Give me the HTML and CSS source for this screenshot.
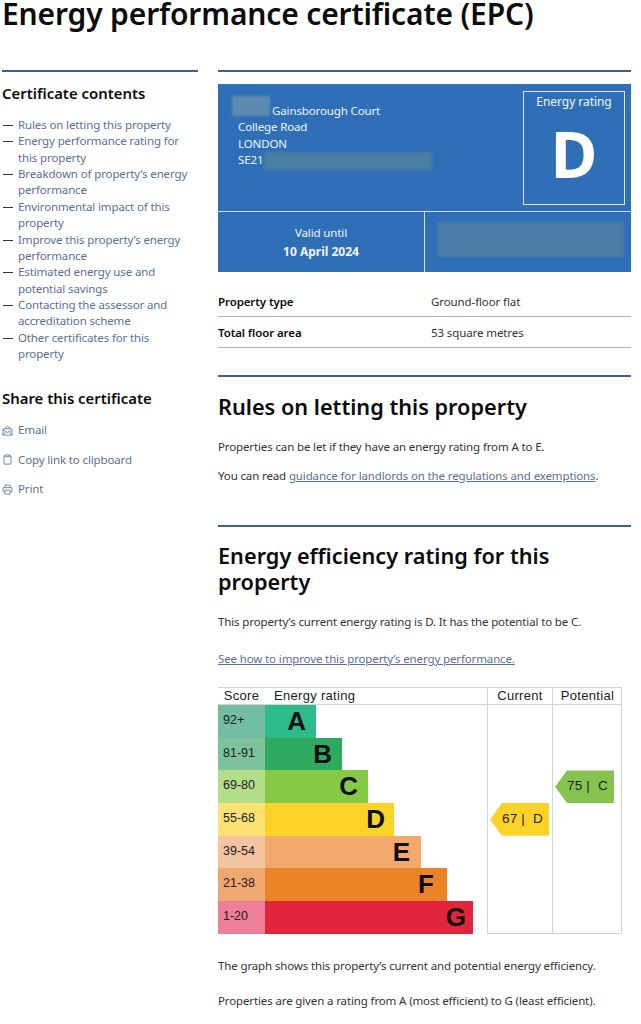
FILE: index.html
```html
<!DOCTYPE html>
<html lang="en">
<head>
<meta charset="utf-8">
<title>Energy performance certificate (EPC)</title>
<link rel="stylesheet" href="styles.css">
</head>
<body>
<h1 class="title">Energy performance certificate (EPC)</h1>
<div class="layout">
  <aside class="side">
    <h2 class="side-h">Certificate contents</h2>
    <ul class="toc">
      <li><a href="#">Rules on letting this property</a></li>
      <li><a href="#">Energy performance rating for this property</a></li>
      <li><a href="#">Breakdown of property’s energy performance</a></li>
      <li><a href="#">Environmental impact of this property</a></li>
      <li><a href="#">Improve this property’s energy performance</a></li>
      <li><a href="#">Estimated energy use and potential savings</a></li>
      <li><a href="#">Contacting the assessor and accreditation scheme</a></li>
      <li><a href="#">Other certificates for this property</a></li>
    </ul>
    <h2 class="side-h share-h">Share this certificate</h2>
    <ul class="share">
      <li><svg class="ico" viewBox="0 0 12 12"><path d="M1 5 6 1.2 11 5V11H1ZM1 5 6 8.2 11 5M1 11 4.5 7.2M11 11 7.5 7.2M3 4H9"/></svg><a href="#">Email</a></li>
      <li><svg class="ico" viewBox="0 0 12 12"><path d="M3.5 2H2.2V11H9.8V2H8.5M3.5 1H8.5V3H3.5Z"/></svg><a href="#">Copy link to clipboard</a></li>
      <li><svg class="ico" viewBox="0 0 12 12"><path d="M3.2 4V1.2H8.8V4M3 8.5H1.2V4H10.8V8.5H9M3.2 6.8H8.8V11H3.2Z"/></svg><a href="#">Print</a></li>
    </ul>
  </aside>
  <main class="main">
    <div class="epc">
      <div class="epc-top">
        <div class="address">
          <div class="addr-first"><span class="redact redact-num"></span><span>Gainsborough Court</span></div>
          <div>College Road</div>
          <div>LONDON</div>
          <div class="addr-post"><span>SE21</span><span class="redact redact-post"></span></div>
        </div>
        <div class="rating-box">
          <div class="rating-label">Energy rating</div>
          <div class="rating-letter">D</div>
        </div>
      </div>
      <div class="epc-bottom">
        <div class="valid">
          <div>Valid until</div>
          <div class="valid-date">10 April 2024</div>
        </div>
        <div class="cert-cell"><span class="redact redact-cert"></span></div>
      </div>
    </div>

    <dl class="facts">
      <div class="fact"><dt>Property type</dt><dd>Ground-floor flat</dd></div>
      <div class="fact"><dt>Total floor area</dt><dd>53 square metres</dd></div>
    </dl>

    <section class="section rules">
      <h2 class="sec-h">Rules on letting this property</h2>
      <p class="para">Properties can be let if they have an energy rating from A to E.</p>
      <p class="para">You can read <a href="#" class="link">guidance for landlords on the regulations and exemptions</a>.</p>
    </section>

    <section class="section efficiency">
      <h2 class="sec-h">Energy efficiency rating for this property</h2>
      <p class="para">This property’s current energy rating is D. It has the potential to be C.</p>
      <p class="para see"><a href="#" class="link">See how to improve this property’s energy performance.</a></p>

      <div class="chart">
        <div class="head h-score">Score</div>
        <div class="head h-rating">Energy rating</div>
        <div class="head h-current">Current</div>
        <div class="head h-potential">Potential</div>
        <div class="col col-current"></div>
        <div class="col col-potential"></div>

        <div class="score s-a">92+</div><div class="bar-cell"><div class="bar b-a w-a">A</div></div>
        <div class="score s-b">81-91</div><div class="bar-cell"><div class="bar b-b w-b">B</div></div>
        <div class="score s-c">69-80</div><div class="bar-cell"><div class="bar b-c w-c">C</div></div>
        <div class="score s-d">55-68</div><div class="bar-cell"><div class="bar b-d w-d">D</div></div>
        <div class="score s-e">39-54</div><div class="bar-cell"><div class="bar b-e w-e">E</div></div>
        <div class="score s-f">21-38</div><div class="bar-cell"><div class="bar b-f w-f">F</div></div>
        <div class="score s-g">1-20</div><div class="bar-cell"><div class="bar b-g w-g">G</div></div>

        <div class="badge badge-current">67 |&nbsp; D</div>
        <div class="badge badge-potential">75 |&nbsp; C</div>
      </div>

      <p class="para after">The graph shows this property’s current and potential energy efficiency.</p>
      <p class="para after2">Properties are given a rating from A (most efficient) to G (least efficient).</p>
    </section>
  </main>
</div>
</body>
</html>
```
FILE: styles.css
```css
* { box-sizing: border-box; }
html, body { margin: 0; padding: 0; }
body {
  width: 641px;
  height: 1024px;
  overflow: hidden;
  background: #fff;
  color: #1a1a1a;
  font-family: "Noto Sans", "Open Sans", sans-serif;
}
a { color: #5c6f92; text-decoration: none; }
ul { list-style: none; margin: 0; padding: 0; }

.title {
  margin: 0 0 0 2px;
  height: 70px;
  font-size: 30px;
  line-height: 28px;
  font-weight: 600;
  color: #0b0c0c;
  letter-spacing: -0.15px;
}
.layout {
  display: grid;
  grid-template-columns: 196px 413px;
  column-gap: 20px;
  padding-left: 2px;
}
.side { border-top: 2px solid #3e6189; padding-top: 11px; }
.side-h {
  margin: 0;
  font-size: 14.9px;
  line-height: 20px;
  font-weight: 600;
  color: #0b0c0c;
}
.toc { margin-top: 14px; font-size: 11.5px; line-height: 16.36px; letter-spacing: -0.13px; }
.toc li { position: relative; padding-left: 16px; padding-right: 8px; }
.toc li::before {
  content: "";
  position: absolute;
  left: 1px;
  top: 8px;
  width: 10px;
  height: 1px;
  background: #333;
}
.share-h { margin-top: 26px; }
.share { margin-top: 14px; font-size: 11.5px; line-height: 16px; letter-spacing: -0.13px; }
.share li { display: flex; align-items: center; gap: 5px; margin-bottom: 13.5px; }
.ico { width: 11px; height: 11px; fill: none; stroke: #6d7f9e; stroke-width: 1; flex: none; }

.main { border-top: 2px solid #3e6189; padding-top: 12px; }
.epc { background: #2e6fb8; color: #f2f6fb; font-size: 11.5px; line-height: 16.4px; letter-spacing: -0.13px; }
.epc-top { display: flex; justify-content: space-between; height: 128px; border-bottom: 1px solid #cfe0f0; padding: 7px 6px 7px 20px; }
.address { padding-top: 12px; }
.addr-first, .addr-post { display: flex; }
.addr-first { gap: 2px; margin-left: -6px; }
.addr-post { gap: 1px; }
.redact { display: block; filter: blur(1px); }
.redact-num { width: 38px; height: 20px; margin-top: -7px; background: #5c8ab0; }
.redact-post { width: 168px; height: 18px; margin-top: 0; background: #4b7ea4; }
.redact-cert { width: 187px; height: 35px; background: #4b7ca8; }
.rating-box {
  width: 102px;
  height: 114px;
  border: 1px solid #dbe8f4;
  text-align: center;
  padding-top: 2px;
}
.rating-label { font-size: 12px; line-height: 16px; letter-spacing: -0.05px; }
.rating-letter { font-size: 64px; line-height: 64px; margin-top: 12px; font-weight: 700; color: #fff; letter-spacing: 0; }
.epc-bottom { display: grid; grid-template-columns: 207px 1fr; height: 60px; }
.valid { text-align: center; padding-top: 11px; line-height: 19px; border-right: 1px solid #cfe0f0; }
.valid-date { font-size: 12px; font-weight: 700; letter-spacing: 0; }
.cert-cell { padding: 10px 8px 0 12px; }

.facts { margin: 14px 0 0; font-size: 11.5px; letter-spacing: -0.1px; }
.fact {
  display: grid;
  grid-template-columns: 213px 1fr;
  height: 31px;
  align-items: center;
  border-bottom: 1px solid #b1b4b6;
}
.fact dt { font-weight: 600; color: #0b0c0c; }
.fact dd { margin: 0; color: #333; }

.section { border-top: 2px solid #3e6189; }
.rules { margin-top: 27px; height: 150px; }
.sec-h {
  margin: 17px 0 0;
  font-size: 21.7px;
  line-height: 26px;
  font-weight: 600;
  color: #0b0c0c;
}
.efficiency .sec-h { margin-top: 16px; }
.para { margin: 0; font-size: 11.5px; line-height: 16px; letter-spacing: -0.13px; color: #333; }
.rules .sec-h + .para { margin-top: 19px; }
.rules .para + .para { margin-top: 13px; }
.efficiency .sec-h + .para { margin-top: 19px; }
.see { margin-top: 21px; }
.link { color: #5c6f92; text-decoration: underline; }

.chart {
  display: grid;
  position: relative;
  width: 404px;
  margin-top: 20px;
  grid-template-columns: 47px 222px 65px 70px;
  grid-template-rows: 17px repeat(7, 32.7px);
  border: 1px solid #d4d4d4;
  border-left: 0;
  border-bottom: 0;
  font-family: "Liberation Sans", Arial, sans-serif;
  color: #1c1c1c;
}
.head {
  grid-row: 1;
  font-size: 13px;
  line-height: 15px;
  letter-spacing: 0.3px;
  border-bottom: 1px solid #d4d4d4;
  text-align: center;
}
.h-score { grid-column: 1; }
.h-rating { grid-column: 2; text-align: left; padding-left: 9px; }
.h-current { grid-column: 3; border-left: 1px solid #d4d4d4; }
.h-potential { grid-column: 4; border-left: 1px solid #d4d4d4; }
.col { grid-row: 2 / 9; border-left: 1px solid #d4d4d4; border-bottom: 1px solid #d4d4d4; }
.col-current { grid-column: 3; }
.col-potential { grid-column: 4; }
.score {
  grid-column: 1;
  font-size: 12.5px;
  line-height: 31px;
  padding-left: 5px;
}
.bar-cell { grid-column: 2; }
.score.s-a, .score.s-a + .bar-cell { grid-row: 2; }
.score.s-b, .score.s-b + .bar-cell { grid-row: 3; }
.score.s-c, .score.s-c + .bar-cell { grid-row: 4; }
.score.s-d, .score.s-d + .bar-cell { grid-row: 5; }
.score.s-e, .score.s-e + .bar-cell { grid-row: 6; }
.score.s-f, .score.s-f + .bar-cell { grid-row: 7; }
.score.s-g, .score.s-g + .bar-cell { grid-row: 8; }
.bar {
  height: 100%;
  text-align: right;
  padding-right: 8px;
  font-size: 26px;
  line-height: 32px;
  font-weight: 700;
  color: #0e0e0e;
}
.w-a { width: 51px; padding-right: 10px; }
.w-b { width: 77px; padding-right: 10px; }
.w-c { width: 103px; padding-right: 10px; }
.w-d { width: 129px; padding-right: 9px; }
.w-e { width: 156px; padding-right: 11px; }
.w-f { width: 182px; padding-right: 13px; }
.w-g { width: 208px; padding-right: 7px; }
.s-a { background: #74bca2; } .b-a { background: #2dbb8c; }
.s-b { background: #7cc39b; } .b-b { background: #2eaa60; }
.s-c { background: #b4dd8a; } .b-c { background: #85c945; }
.s-d { background: #fbe272; } .b-d { background: #fbd327; }
.s-e { background: #f3c49f; } .b-e { background: #f3a96c; }
.s-f { background: #efa870; } .b-f { background: #ec8327; }
.s-g { background: #ee7f98; } .b-g { background: #e2243c; }

.badge {
  font-size: 13.5px;
  line-height: 32px;
  height: 32.7px;
  padding-left: 12px;
  white-space: nowrap;
  letter-spacing: 0.2px;
  clip-path: polygon(0 50%, 12px 0, 100% 0, 100% 100%, 12px 100%);
}
.badge-current { grid-column: 3; grid-row: 5; width: 59px; margin-left: 3px; padding-left: 12px; background: #fbd327; }
.badge-potential { grid-column: 4; grid-row: 4; width: 59px; margin-left: 3px; background: #85c34e; }

.after { margin-top: 24px; }
.after2 { margin-top: 19px; }
```
